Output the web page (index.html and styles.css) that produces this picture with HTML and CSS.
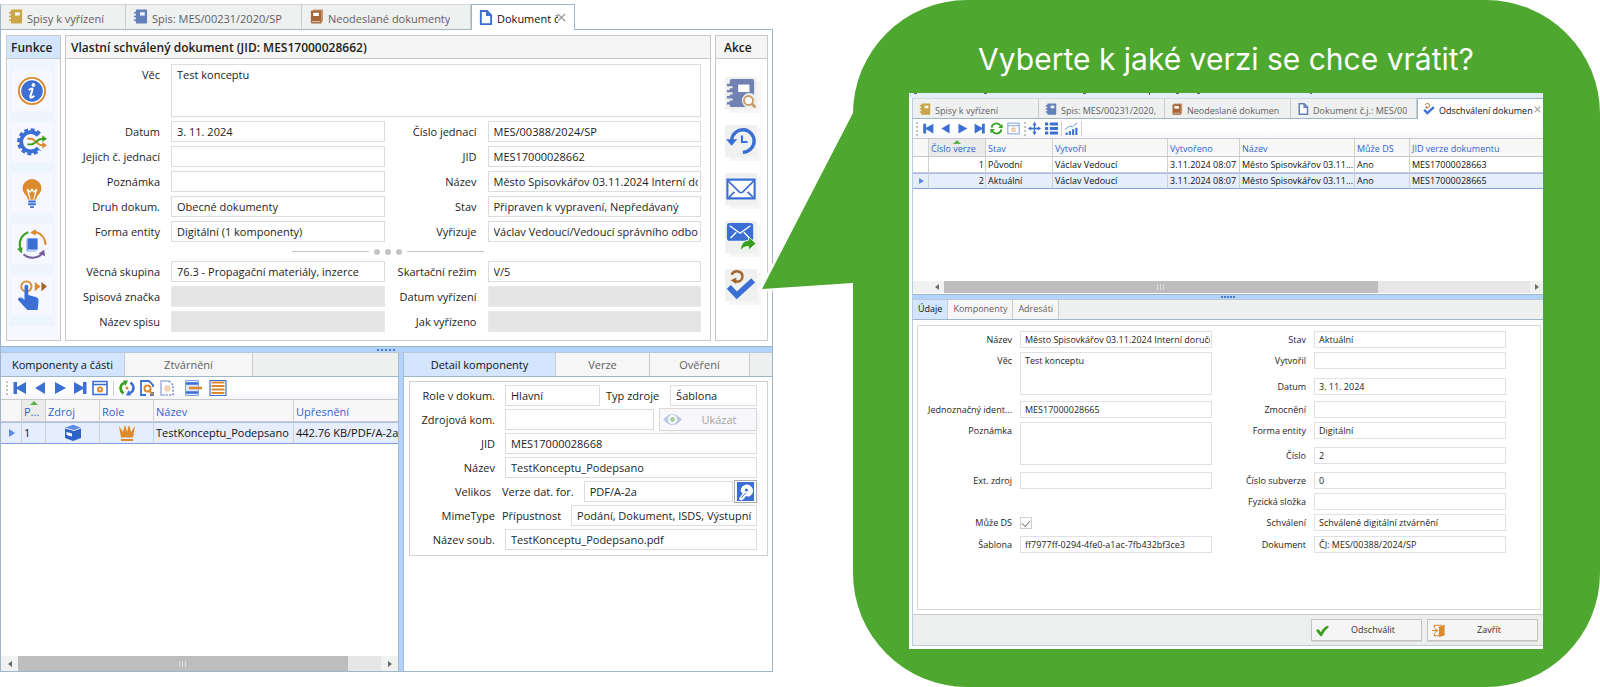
FILE: index.html
```html
<!DOCTYPE html>
<html lang="cs">
<head>
<meta charset="utf-8">
<meta name="viewport" content="width=device-width, initial-scale=1">
<title>Vlastní schválený dokument</title>
<link rel="stylesheet" href="styles.css">
</head>
<body>
<svg class="defs" aria-hidden="true">
  <symbol id="book" viewBox="0 0 16 16"><path fill="currentColor" d="M3 1.500q0-1 1-1h10q1 0 1 1v13q0 1-1 1H4q-1 0-1-1z"/><path stroke="currentColor" stroke-width="1.800" d="M1 4h4M1 8h4M1 12h4"/><path fill="#f4f6fb" d="M7.500 3.500h5v3.500h-5z"/></symbol>
  <symbol id="volume" viewBox="0 0 16 16"><path fill="#c79b74" d="M4 .5h11v12l-2 3z"/><path fill="#a5673a" d="M2 2.500q0-1 1-1h9q1 0 1 1v13H3q-1 0-1-1z"/><path fill="#fff" d="M4.500 4h6v3.500h-6z"/><path stroke="#e3cdbb" d="M3 13.500h9"/></symbol>
  <symbol id="page" viewBox="0 0 16 16"><path fill="#fff" stroke="currentColor" stroke-width="2" d="M3 1h6.500L14 5.500V15H3zM9.500 1v4.500H14"/></symbol>
  <symbol id="close" viewBox="0 0 10 10"><path fill="none" stroke="#a0a0a0" stroke-width="1.500" d="m1 1 8 8M9 1 1 9"/></symbol>
  <symbol id="first" viewBox="0 0 16 16"><path fill="#3b6fd4" d="M1.500 2H5v5l9-5v12L5 9v5H1.500z"/></symbol>
  <symbol id="prev" viewBox="0 0 16 16"><path fill="#3b6fd4" d="M13 2v12L3 8z"/></symbol>
  <symbol id="next" viewBox="0 0 16 16"><path fill="#3b6fd4" d="M3 2v12l11-6z"/></symbol>
  <symbol id="last" viewBox="0 0 16 16"><path fill="#3b6fd4" d="M14.500 2H11v5L2 2v12l9-5v5h3.500z"/></symbol>
  <symbol id="card" viewBox="0 0 16 16"><path fill="#fff" stroke="#3b6fd4" stroke-width="1.600" d="M1 1.500h14v13H1z"/><path stroke="#3b6fd4" stroke-width="1.500" d="M1 4.500h14"/><circle cx="8" cy="9.500" r="2" fill="#fff" stroke="#db8a2c" stroke-width="2"/></symbol>
  <symbol id="refresh2" viewBox="0 0 16 16"><path fill="none" stroke="#39a01e" stroke-width="2.600" d="M4.500 13.500C0 10 1 4 5.500 3"/><path fill="#39a01e" d="M4 .5h5L6.500 6z"/><path fill="none" stroke="#3b6fd4" stroke-width="2.600" d="M11.500 2.500c4.500 3.500 3.500 9.500-1 10.500"/><path fill="#3b6fd4" d="M12 15.500H7L9.500 10z"/><circle cx="8" cy="8" r="1.500" fill="#db8a2c"/></symbol>
  <symbol id="refresh" viewBox="0 0 16 16"><path fill="none" stroke="#39a01e" stroke-width="2.200" d="M2 7C2.500 1.500 10 0 13 4.500M14 9c-.5 5.500-8 7-11 2.500"/><path fill="#39a01e" d="M15.500 2v5.500H10zM.5 14V8.500H6z"/></symbol>
  <symbol id="find" viewBox="0 0 16 16"><path fill="#fff" stroke="#3b6fd4" stroke-width="1.800" d="M7 15H2V1h8l4 4v2M14 12v3h-3"/><circle cx="8.500" cy="8.500" r="3" fill="#fff" stroke="#db8a2c" stroke-width="2"/><path stroke="#db8a2c" stroke-width="2.200" d="m10.500 11 3.500 4"/></symbol>
  <symbol id="draft" viewBox="0 0 16 16"><path fill="none" stroke="#a5b4dc" stroke-width="1.600" d="M6 15H2V1h8"/><path fill="none" stroke="#8093c9" stroke-width="1.600" stroke-dasharray="2 1.500" d="m10 1 4 4v10H6"/><circle cx="8.500" cy="8.500" r="3.200" fill="#f0d2b4"/></symbol>
  <symbol id="group" viewBox="0 0 18 16"><path fill="#dfe8fa" stroke="#7fa0e2" stroke-width="1" d="M1.500 .5h13v15h-13z"/><path stroke="#3b6fd4" stroke-width="2.600" d="M2 3.500h12M2 12.500h12"/><path stroke="#db8a2c" stroke-width="2.600" d="M5 8h13"/></symbol>
  <symbol id="lines" viewBox="0 0 18 16"><path fill="#fff" stroke="#3b6fd4" stroke-width="1.200" d="M1 .5h16v15H1z"/><path stroke="#db8a2c" stroke-width="2" d="M2.500 2.500h13M2.500 6h13M2.500 9.500h13M2.500 13h13"/></symbol>
  <symbol id="move" viewBox="0 0 16 16"><path stroke="#3b6fd4" stroke-width="1.800" d="M8 1v14M1 8h14"/><path fill="#3b6fd4" d="M5.500 4 8 0l2.500 4zM5.500 12 8 16l2.500-4zM4 5.500 0 8l4 2.500zM12 5.500 16 8l-4 2.500z"/></symbol>
  <symbol id="list" viewBox="0 0 16 16"><path stroke="#3b6fd4" stroke-width="3.600" d="M0 2.500h4M6 2.500h10M0 8h4M6 8h10M0 13.500h4M6 13.500h10"/></symbol>
  <symbol id="chart" viewBox="0 0 16 16"><path stroke="#3b6fd4" stroke-width="2.600" d="M2 16v-3M6 16v-5M10 16V9M14 16V7"/><path fill="none" stroke="#6d92df" stroke-width="1.200" d="m0 9 6-4 3 1 6-5"/></symbol>
  <symbol id="box" viewBox="0 0 18 18"><path fill="#2f62c6" d="M1 4 9 1l8 3v10l-8 3-8-3z"/><path fill="#5d8be6" d="m1 4 8-3 8 3-7 2.500z"/><path stroke="#e9effc" stroke-width="1" fill="none" d="m1 4 9 2.500L17 4"/><path fill="#fff" d="m2.500 8 5.500 1.500v3L2.500 11z"/></symbol>
  <symbol id="crown" viewBox="0 0 18 18"><path fill="#db8a2c" d="m1 2 4 6 1.500-6h1L9 8l1.500-6h1L13 8l4-6-2 11.500H3z"/><path stroke="#db8a2c" stroke-width="2" d="M3 16h12"/></symbol>
  <symbol id="info" viewBox="0 0 32 32"><circle cx="16" cy="16" r="14" fill="#fff" stroke="#db8a2c" stroke-width="2"/><circle cx="16" cy="16" r="11.500" fill="#3b6fd4"/><circle cx="17.500" cy="9.500" r="2" fill="#fff"/><path fill="none" stroke="#fff" stroke-width="2.200" d="M12.500 15q3-2 4-1.500c1 .5-3.500 9-2 9.500q1 .5 4-2"/></symbol>
  <symbol id="gear" viewBox="0 0 32 32"><path fill="none" stroke="#3b6fd4" stroke-width="4" stroke-dasharray="4 2.600" d="M24 7.500A12.500 12.500 0 1 0 24 24"/><path fill="none" stroke="#3b6fd4" stroke-width="4" d="M22.500 9A10.300 10.300 0 1 0 22.500 22.500"/><path fill="none" stroke="#db8a2c" stroke-width="2" d="M11 12.500h4c5 0 6 7 12 7h2"/><path fill="none" stroke="#39a01e" stroke-width="2" d="M11 18.500h4c5 0 6-6 12-6h2"/><path fill="#39a01e" d="m27 9 5 3.500-5 3.500z"/><path fill="#db8a2c" d="m27 16 5 3.500-5 3.500z"/></symbol>
  <symbol id="bulb" viewBox="0 0 32 32"><path fill="#db8a2c" d="M16 1a10 10 0 0 0-10 10c0 6 5 7 5.500 12h9C21 18 26 17 26 11A10 10 0 0 0 16 1"/><path fill="none" stroke="#fff" stroke-width="1.400" d="m14 22-3-10 3 3 2-3 2 3 3-3-3 10"/><path stroke="#3b6fd4" stroke-width="2" d="M12 25h8M12 28h8M14 31h4"/></symbol>
  <symbol id="cycle" viewBox="0 0 32 32"><path fill="#3b6fd4" d="M11 10h11v12H11z"/><path fill="#8dabec" d="M10 11h1.500v12H21v1H10z"/><path fill="none" stroke="#39a01e" stroke-width="2.200" d="M12 3.500C5 6 1.500 13 3.500 21"/><path fill="#39a01e" d="m0 21 6-1.500L5 26z"/><path fill="none" stroke="#db8a2c" stroke-width="2.200" d="M18 3c7 1 12 6 12.500 14"/><path fill="#db8a2c" d="M20 0v7l-6-3z"/><path fill="none" stroke="#75609c" stroke-width="2.200" d="M7 27c5 5 15 5 20-1"/><path fill="#75609c" d="m29 22 1 7-7-3z"/></symbol>
  <symbol id="tap" viewBox="0 0 32 32"><circle cx="10" cy="7" r="5.500" fill="none" stroke="#db8a2c" stroke-width="2"/><path fill="#3b6fd4" d="M8 7q0-2 2-2t2 2v9l8 2q3 1 3 4l-1 10H11L1 21q0-3 4-2l3 2z"/><path fill="#db8a2c" d="m19 2 6 5-6 5z"/><path fill="#a5652a" d="m26 2 6 5-6 5z"/></symbol>
  <symbol id="bookfind" viewBox="0 0 32 32"><path fill="#7181b1" d="M4 3q0-2 2-2h22q2 0 2 2v28H6q-2 0-2-2z"/><path stroke="#eef0ef" stroke-width="3" d="M2 9.500h5M2 16h5M2 22.500h5"/><path stroke="#7181b1" stroke-width="2.600" d="M1 7.500h7M1 14h7M1 20.500h7M1 27h7"/><path fill="#fff" d="M13 7h12v8H13z"/><circle cx="25" cy="24" r="8" fill="#eef0ef"/><circle cx="24" cy="24" r="4.800" fill="#fff" stroke="#c99a6b" stroke-width="2"/><path stroke="#c99a6b" stroke-width="3" d="m27.500 27.500 4 4"/></symbol>
  <symbol id="history" viewBox="0 0 32 32"><path fill="none" stroke="#3b6fd4" stroke-width="3.600" d="M6 15a12 12 0 1 1 12 13"/><path fill="#3b6fd4" d="M0 14h12l-6 7z"/><path fill="none" stroke="#3b6fd4" stroke-width="2.200" d="M17 10v7h6"/></symbol>
  <symbol id="mail" viewBox="0 0 32 32"><path fill="#fff" stroke="#3b6fd4" stroke-width="2.200" d="M1.500 6h29v20h-29z"/><path fill="none" stroke="#3b6fd4" stroke-width="1.800" d="m2 7 12 12q2 1.500 4 0L30 7M3 25l6-6M29 25l-6-6"/></symbol>
  <symbol id="send" viewBox="0 0 32 32"><rect x="1" y="1" width="28" height="19" rx="3" fill="#3b6fd4"/><path fill="none" stroke="#fff" stroke-width="1.500" d="m4 4 11 8L26 4M5 17l6-6M25 17l-6-6"/><path fill="#39a01e" stroke="#fff" stroke-width=".8" d="M24 15.500 32 23l-8 7v-4q-6 0-9 5 1-11 9-11.500z"/></symbol>
  <symbol id="unapprove" viewBox="0 0 32 32"><path fill="none" stroke="#3b6fd4" stroke-width="6" d="m3 18 8.500 9L29 11"/><path fill="none" stroke="#a5652a" stroke-width="2.600" d="M6 5C9-1 18 1 17.500 7.500 17 12 13 13 10 12"/><path fill="#a5652a" d="m11 8v7L5 11z"/></symbol>
  <symbol id="eye" viewBox="0 0 20 14"><path fill="#b8cade" d="M0 7Q10-5 20 7 10 19 0 7"/><circle cx="10" cy="7" r="5" fill="#f5f7fc"/><circle cx="10" cy="7" r="2.600" fill="#a9cf9f"/></symbol>
  <symbol id="disk" viewBox="0 0 20 20"><path fill="#3b6fd4" d="M1 0h18v20H1z"/><path fill="#fff" d="M5 10a6.500 6.500 0 1 1 8 5.500l-2-1-4 4.500q-3 1-4-1.500L7 12z"/><circle cx="11" cy="8.500" r="1.600" fill="#3b6fd4"/><path stroke="#3b6fd4" stroke-width="1" d="m5.500 16.500 5-5"/></symbol>
  <symbol id="check" viewBox="0 0 16 16"><path fill="#39a01e" d="m0 8 3-2 3 4q3-6 8-8l2 1.500q-5 4-9 11.500H5.500z"/></symbol>
  <symbol id="exit" viewBox="0 0 16 16"><path fill="none" stroke="#db8a2c" stroke-width="1.400" d="M3 5V1.500h9M3 11v3.500h6"/><path fill="#db8a2c" d="M8.500 3.500 15.500 1v13l-7 2z"/><path fill="#db8a2c" d="M0 7.300h4V5l3.500 3L4 11V8.700H0z"/></symbol>
</svg>

<main class="stage">
  <section class="app">
    <nav class="tabs doc-tabs">
      <button class="tab tab-a"><svg class="gold"><use href="#book"/></svg><span>Spisy k vyřízení</span></button>
      <button class="tab tab-b"><svg class="slate"><use href="#book"/></svg><span>Spis: MES/00231/2020/SP</span></button>
      <button class="tab tab-c"><svg><use href="#volume"/></svg><span>Neodeslané dokumenty</span></button>
      <button class="tab tab-d active"><svg class="blue"><use href="#page"/></svg><span class="cut">Dokument č</span><svg class="x"><use href="#close"/></svg></button>
    </nav>
    <div class="app-body">
      <div class="upper">
        <aside class="side functions">
          <h2>Funkce</h2>
          <div class="side-list">
            <button aria-label="Informace"><svg><use href="#info"/></svg></button>
            <button aria-label="Procesy"><svg><use href="#gear"/></svg></button>
            <button aria-label="Nápověda"><svg><use href="#bulb"/></svg></button>
            <button aria-label="Oběh"><svg><use href="#cycle"/></svg></button>
            <button aria-label="Rychlá volba"><svg><use href="#tap"/></svg></button>
          </div>
        </aside>
        <section class="record">
          <h2>Vlastní schválený dokument (JID: MES17000028662)</h2>
          <form class="record-form">
            <label for="vec">Věc</label><textarea id="vec" class="wide" readonly>Test konceptu</textarea>
            <label for="datum">Datum</label><input id="datum" readonly value="3. 11. 2024">
            <label for="cj">Číslo jednací</label><input id="cj" readonly value="MES/00388/2024/SP">
            <label for="jcj">Jejich č. jednací</label><input id="jcj" readonly>
            <label for="jid">JID</label><input id="jid" readonly value="MES17000028662">
            <label for="pozn">Poznámka</label><input id="pozn" readonly>
            <label for="nazev">Název</label><input id="nazev" readonly value="Město Spisovkářov 03.11.2024 Interní doručení">
            <label for="druh">Druh dokum.</label><input id="druh" readonly value="Obecné dokumenty">
            <label for="stav">Stav</label><input id="stav" readonly value="Připraven k vypravení, Nepředávaný">
            <label for="forma">Forma entity</label><input id="forma" readonly value="Digitální (1 komponenty)">
            <label for="vyr">Vyřizuje</label><input id="vyr" readonly value="Václav Vedoucí/Vedoucí správního odboru">
            <div class="divider"><hr><i></i><i></i><i></i><hr></div>
            <label for="skup">Věcná skupina</label><input id="skup" readonly value="76.3 - Propagační materiály, inzerce">
            <label for="skart">Skartační režim</label><input id="skart" readonly value="V/5">
            <label for="sz">Spisová značka</label><input id="sz" disabled>
            <label for="dv">Datum vyřízení</label><input id="dv" disabled>
            <label for="ns">Název spisu</label><input id="ns" disabled>
            <label for="jv">Jak vyřízeno</label><input id="jv" disabled>
          </form>
        </section>
        <aside class="side actions">
          <h2>Akce</h2>
          <div class="side-list">
            <button aria-label="Prohlížet spis"><svg><use href="#bookfind"/></svg></button>
            <button aria-label="Historie"><svg><use href="#history"/></svg></button>
            <button aria-label="Obálka"><svg><use href="#mail"/></svg></button>
            <button aria-label="Vypravit"><svg><use href="#send"/></svg></button>
            <button aria-label="Odschválit dokument"><svg><use href="#unapprove"/></svg></button>
          </div>
        </aside>
      </div>
      <div class="splitter"><b></b></div>
      <div class="lower">
        <section class="components">
          <nav class="tabs sub-tabs">
            <button class="tab active comp-a">Komponenty a části</button>
            <button class="tab comp-b">Ztvárnění</button>
          </nav>
          <div class="toolbar">
            <i class="grip"></i>
            <button aria-label="První"><svg><use href="#first"/></svg></button>
            <button aria-label="Předchozí"><svg><use href="#prev"/></svg></button>
            <button aria-label="Další"><svg><use href="#next"/></svg></button>
            <button aria-label="Poslední"><svg><use href="#last"/></svg></button>
            <button aria-label="Karta"><svg><use href="#card"/></svg></button>
            <i class="rule"></i>
            <button aria-label="Obnovit"><svg><use href="#refresh2"/></svg></button>
            <button aria-label="Hledat"><svg><use href="#find"/></svg></button>
            <button class="draft" aria-label="Koncept"><svg><use href="#draft"/></svg></button>
            <button class="broad" aria-label="Seskupit"><svg><use href="#group"/></svg></button>
            <button class="broad" aria-label="Řádky"><svg><use href="#lines"/></svg></button>
          </div>
          <table class="grid comp-grid">
            <colgroup><col class="c21"><col class="c24"><col class="c54"><col class="c54"><col class="c140"><col></colgroup>
            <thead><tr><th></th><th class="sorted">P...</th><th>Zdroj</th><th>Role</th><th>Název</th><th>Upřesnění</th></tr></thead>
            <tbody><tr class="current"><td></td><td>1</td><td class="pic"><svg><use href="#box"/></svg></td><td class="pic"><svg><use href="#crown"/></svg></td><td>TestKonceptu_Podepsano</td><td>442.76 KB/PDF/A-2a</td></tr></tbody>
          </table>
          <div class="scrollbar"><i class="arrow left"></i><span class="track"><b class="thumb thumb-l"></b></span><i class="arrow"></i></div>
        </section>
        <div class="vsplit"></div>
        <section class="detail">
          <nav class="tabs sub-tabs">
            <button class="tab active det-a">Detail komponenty</button>
            <button class="tab det-b">Verze</button>
            <button class="tab det-c">Ověření</button>
          </nav>
          <form class="detail-form">
            <div class="row"><label for="role">Role v dokum.</label><input id="role" class="f95" readonly value="Hlavní"><label class="mid" for="typ">Typ zdroje</label><input id="typ" readonly value="Šablona"></div>
            <div class="row"><label for="zk">Zdrojová kom.</label><input id="zk" readonly><button type="button" class="show" disabled><svg><use href="#eye"/></svg><span>Ukázat</span></button></div>
            <div class="row"><label for="djid">JID</label><input id="djid" readonly value="MES17000028668"></div>
            <div class="row"><label for="dn">Název</label><input id="dn" readonly value="TestKonceptu_Podepsano"></div>
            <div class="row"><span class="lead vel">Velikos</span><label class="near" for="vdf">Verze dat. for.</label><input id="vdf" readonly value="PDF/A-2a"><button type="button" class="disk" aria-label="Uložit"><svg><use href="#disk"/></svg></button></div>
            <div class="row"><span class="lead">MimeType</span><label class="near" for="prip">Přípustnost</label><input id="prip" readonly value="Podání, Dokument, ISDS, Výstupní"></div>
            <div class="row"><label for="soub">Název soub.</label><input id="soub" readonly value="TestKonceptu_Podepsano.pdf"></div>
          </form>
        </section>
      </div>
    </div>
  </section>

  <section class="bubble">
    <svg class="tail" viewBox="0 0 112 190" aria-hidden="true"><path fill="none" stroke="#fff" stroke-width="5" d="M92 16 5 184l87-6"/><path fill="#4ea72e" d="M96 8 5 184l91-6h16V8z"/></svg>
    <h1>Vyberte k jaké verzi se chce vrátit?</h1>
    <div class="window">
      <svg class="strip" viewBox="0 0 634 6" preserveAspectRatio="none" aria-hidden="true"><path fill="#e4edfa" d="M0 0h634v6H0z"/><path fill="#333" d="M5 0h3v1H5zM75 0h3v1h-3zM174 0h3v1h-3zM240 0h1v2h-1zM267 0h3v1h-3zM288 0h3v1h-3zM401 0h2v1h-2z"/></svg>
      <nav class="tabs win-tabs">
        <button class="tab"><svg class="gold"><use href="#book"/></svg><span>Spisy k vyřízení</span></button>
        <button class="tab"><svg class="slate"><use href="#book"/></svg><span>Spis: MES/00231/2020,</span></button>
        <button class="tab"><svg><use href="#volume"/></svg><span>Neodeslané dokumen</span></button>
        <button class="tab"><svg class="slate"><use href="#page"/></svg><span>Dokument č.j.: MES/00</span></button>
        <button class="tab active"><svg><use href="#unapprove"/></svg><span>Odschválení dokumen</span><svg class="x"><use href="#close"/></svg></button>
      </nav>
      <div class="toolbar small">
        <i class="grip"></i>
        <button aria-label="První"><svg><use href="#first"/></svg></button>
        <button aria-label="Předchozí"><svg><use href="#prev"/></svg></button>
        <button aria-label="Další"><svg><use href="#next"/></svg></button>
        <button aria-label="Poslední"><svg><use href="#last"/></svg></button>
        <button aria-label="Obnovit"><svg><use href="#refresh"/></svg></button>
        <button class="faded" aria-label="Karta"><svg><use href="#card"/></svg></button>
        <i class="grip"></i>
        <button aria-label="Přesunout"><svg><use href="#move"/></svg></button>
        <button aria-label="Seznam"><svg><use href="#list"/></svg></button>
        <i class="rule"></i>
        <button aria-label="Graf"><svg><use href="#chart"/></svg></button>
        <i class="rule"></i>
      </div>
      <div class="list">
        <table class="grid ver-grid">
          <colgroup><col class="c16"><col class="c57"><col class="c67"><col class="c115"><col class="c72"><col class="c115"><col class="c55"><col></colgroup>
          <thead><tr><th></th><th class="sorted">Číslo verze</th><th>Stav</th><th>Vytvořil</th><th>Vytvořeno</th><th>Název</th><th>Může DS</th><th>JID verze dokumentu</th></tr></thead>
          <tbody>
            <tr><td></td><td class="num">1</td><td>Původní</td><td>Václav Vedoucí</td><td>3.11.2024 08:07</td><td>Město Spisovkářov 03.11...</td><td>Ano</td><td>MES17000028663</td></tr>
            <tr class="current"><td></td><td class="num">2</td><td>Aktuální</td><td>Václav Vedoucí</td><td>3.11.2024 08:07</td><td>Město Spisovkářov 03.11...</td><td>Ano</td><td>MES17000028665</td></tr>
          </tbody>
        </table>
        <div class="scrollbar thin"><i class="arrow left"></i><span class="track"><b class="thumb thumb-r"></b></span><i class="arrow"></i></div>
      </div>
      <div class="splitter thin"><b></b></div>
      <nav class="tabs sub-tabs thin">
        <button class="tab active">Údaje</button>
        <button class="tab">Komponenty</button>
        <button class="tab">Adresáti</button>
      </nav>
      <div class="sheet">
        <form class="version-form">
          <label class="r1" for="v1">Název</label><input class="r1" id="v1" readonly value="Město Spisovkářov 03.11.2024 Interní doručení">
          <label class="r2" for="v2">Věc</label><textarea class="r2" id="v2" readonly>Test konceptu</textarea>
          <label class="r4" for="v3">Jednoznačný ident...</label><input class="r4" id="v3" readonly value="MES17000028665">
          <label class="r5" for="v4">Poznámka</label><textarea class="r5" id="v4" readonly></textarea>
          <label class="r7" for="v5">Ext. zdroj</label><input class="r7" id="v5" readonly>
          <label class="r9" for="v6">Může DS</label><input class="r9" id="v6" type="checkbox" checked disabled>
          <label class="r10" for="v7">Šablona</label><input class="r10" id="v7" readonly value="ff7977ff-0294-4fe0-a1ac-7fb432bf3ce3">
          <label class="r1 two" for="w1">Stav</label><input class="r1 two" id="w1" readonly value="Aktuální">
          <label class="r2 two" for="w2">Vytvořil</label><input class="r2 two" id="w2" readonly>
          <label class="r3 two" for="w3">Datum</label><input class="r3 two" id="w3" readonly value="3. 11. 2024">
          <label class="r4 two" for="w4">Zmocnění</label><input class="r4 two" id="w4" readonly>
          <label class="r5 two" for="w5">Forma entity</label><input class="r5 two" id="w5" readonly value="Digitální">
          <label class="r6 two" for="w6">Číslo</label><input class="r6 two" id="w6" readonly value="2">
          <label class="r7 two" for="w7">Číslo subverze</label><input class="r7 two" id="w7" readonly value="0">
          <label class="r8 two" for="w8">Fyzická složka</label><input class="r8 two" id="w8" readonly>
          <label class="r9 two" for="w9">Schválení</label><input class="r9 two" id="w9" readonly value="Schválené digitální ztvárnění">
          <label class="r10 two" for="w10">Dokument</label><input class="r10 two" id="w10" readonly value="ČJ: MES/00388/2024/SP">
        </form>
      </div>
      <footer class="buttons">
        <button><svg><use href="#check"/></svg><span>Odschválit</span></button>
        <button><svg><use href="#exit"/></svg><span>Zavřít</span></button>
      </footer>
    </div>
  </section>
</main>
</body>
</html>
```

FILE: styles.css
```css
* { box-sizing: border-box; }
body { margin: 0; background: #fff; color: #1d1d1d; font: 11px/16px "Open Sans", "Noto Sans", sans-serif; }
button, input, textarea { font: inherit; color: inherit; margin: 0; border-radius: 0; }
button { padding: 0; border: 0; background: none; }
svg { display: block; flex: none; }
h1, h2, form, hr { margin: 0; }
.defs { position: absolute; width: 0; height: 0; }

.stage { display: grid; grid-template-columns: 773fr 80fr 747fr; min-height: 100vh; }
.app { display: flex; flex-direction: column; padding: 4px 0 15px; min-width: 0; }
.app-body { flex: 1; display: flex; flex-direction: column; border: 1px solid #9fb6c6; border-top: 0; }

/* tabs */
.tabs { display: flex; }
.tab { display: flex; align-items: center; text-align: left; white-space: nowrap; overflow: hidden; color: #5f5f5f; background: #eff0f0; border-right: 1px solid #c8cccf; }
.tab.active { color: #111; }
.tab span { overflow: hidden; }
.gold { color: #c9a748; }
.slate { color: #6480b8; }
.blue { color: #3b6fd4; }
.doc-tabs { height: 26px; border-bottom: 1px solid #9fb6c6; }
.doc-tabs .tab { height: 25px; gap: 4px; padding: 3px 0 0 7px; border-top: 1px solid #d5d8da; }
.doc-tabs .tab svg { width: 15px; height: 15px; margin-top: -4px; }
.doc-tabs .tab.active { height: 26px; padding-left: 6px; background: #fff; border: 1px solid #9fb6c6; border-bottom: 0; }
.doc-tabs .tab svg.x { width: 9px; height: 9px; margin-left: -5px; }
.tab-a { width: 126px; border-left: 1px solid #9fb6c6; }
.tab-b { width: 176px; }
.tab-c { width: 169px; }
.tab-d { width: 104px; }
.tab-d .cut { width: 61px; }

/* upper part */
.upper { display: flex; gap: 4px; padding: 5px 4px 5px 5px; }
.side, .record { border: 1px solid #c9c9c9; }
h2 { height: 23px; padding: 0 5px; font-size: 12px; line-height: 23px; font-weight: 600; background: #f5f5f5; border-bottom: 1px solid #c9c9c9; white-space: nowrap; overflow: hidden; }
.side { display: flex; flex-direction: column; }
.side h2 { padding: 0 4px; }
.actions h2 { padding: 0 8px; }
.side-list { display: flex; flex-direction: column; align-items: center; }
.side-list svg { width: 30px; height: 30px; }
.functions { width: 55px; background: #f6f7ff; }
.functions h2 { background: #d3e5ff; }
.functions .side-list { gap: 11px; margin: 1px 5px 14px 2px; padding: 11px 0; background: #eef5ff; }
.functions button { display: grid; place-items: center; width: 42px; height: 40px; background: #f6f7ff; }
.record { flex: 1; min-width: 0; }
.actions { width: 53px; }
.actions .side-list { gap: 16px; padding: 18px 2px 0 0; }
.actions button { background: #eff0f0; padding: 1px; box-shadow: 4px 4px 0 #f6f6f6; }

input, textarea { width: 100%; min-width: 0; padding: 0 2px 0 5px; border: 1px solid #dcdcdc; background: #fff; outline: 0; resize: none; overflow: hidden; }
input { height: 21px; }
label { text-align: right; white-space: nowrap; }
.record-form { display: grid; grid-template-columns: 86px 1fr 81px 1fr; gap: 4px 11px; padding: 5px 9px 5px 8px; }
.record-form label { line-height: 21px; }
.wide { grid-column: 2 / -1; height: 53px; padding-top: 2px; display: block; }
input:disabled { background: #e5e5e5; border-color: #e9e9e9; }
.divider { grid-column: 1 / -1; display: flex; align-items: center; justify-content: center; gap: 5px; height: 11px; }
.divider hr { width: 77px; height: 1px; border: 0; background: #c4c4c4; }
.divider i { width: 6px; height: 6px; border-radius: 3px; background: #c4c4c4; }

/* splitters */
.splitter { display: flex; align-items: center; justify-content: center; height: 7px; background: #b3d3fc; border-top: 1px solid #9fb6c6; border-bottom: 1px solid #b9c9d8; }
.splitter b { width: 19px; height: 2px; background: repeating-linear-gradient(90deg, #4a7bd8 0 2px, transparent 2px 4px); }
.splitter.thin { height: 6px; }
.splitter.thin b { width: 15px; background: repeating-linear-gradient(90deg, #4a7bd8 0 2px, transparent 2px 3px); }
.vsplit { width: 6px; background: #b3d3fc; border: 1px solid #a5bdd2; border-width: 0 1px; }

/* lower part */
.lower { flex: 1; display: flex; }
.components { flex: 397 1 0; display: flex; flex-direction: column; min-width: 0; }
.detail { flex: 368 1 0; min-width: 0; }
.sub-tabs { height: 24px; background: #eef0f0; border-bottom: 1px solid #9fb6c6; }
.sub-tabs .tab { justify-content: center; background: #f6f6f6; }
.sub-tabs .tab.active { background: #d3e5ff; }
.comp-a { width: 124px; }
.comp-b { width: 128px; }
.det-a { width: 152px; }
.det-b { width: 94px; }
.det-c { width: 100px; }

.toolbar { display: flex; align-items: center; height: 23px; padding-left: 5px; gap: 4px; background: linear-gradient(#fff 60%, #f6f7fd); border-bottom: 1px solid #c9c9c9; }
.toolbar button { width: 16px; padding: 0; }
.toolbar svg { width: 16px; height: 16px; }
.toolbar .draft { margin-right: 5px; }
.toolbar .broad { width: 21px; }
.toolbar .broad svg { width: 18px; }
.grip { width: 2px; height: 14px; background: repeating-linear-gradient(#c2c2c2 0 2px, transparent 2px 4px); }
.rule { width: 1px; height: 15px; margin: 0 1px; background: #d0d0d0; }
.toolbar.small { height: 20px; padding-left: 3px; }
.toolbar.small button { width: 13px; }
.toolbar.small svg { width: 13px; height: 13px; }
.toolbar.small .grip ~ .grip { margin-right: -2px; }
.toolbar.small .rule { margin: 0 -1px; }
.faded { opacity: .5; }

.grid { width: 100%; table-layout: fixed; border-collapse: separate; border-spacing: 0; color: #111; }
.grid th { height: 22px; padding: 2px 2px 0; font-weight: 400; text-align: left; color: #3064cc; background: #f7f7f7; }
.grid td { height: 22px; padding: 0 2px; }
.grid th, .grid td { border-right: 1px solid #d0d0d0; border-bottom: 1px solid #c9c9c9; white-space: nowrap; overflow: hidden; }
.grid th:last-child, .grid td:last-child { border-right: 0; }
.grid .sorted { background: #ebebeb; position: relative; }
.sorted::before { content: ""; position: absolute; top: 1px; left: calc(50% - 4px); border: 4px solid transparent; border-top: 0; border-bottom-color: #5eb04a; }
.grid .current td { background: #e6edfc; border-bottom-color: #7f9fe0; border-top: 1px solid #a9bff0; }
.current td:first-child::before { content: ""; display: block; margin-left: 6px; width: 0; border: 4px solid transparent; border-left: 6px solid #5a8ae0; border-right: 0; }
.pic svg { width: 18px; height: 18px; margin: 0 auto; }
.num { text-align: right; }
.c16 { width: 16px; } .c21 { width: 21px; } .c24 { width: 24px; } .c54 { width: 54px; } .c55 { width: 55px; } .c57 { width: 57px; } .c67 { width: 67px; } .c72 { width: 72px; } .c115 { width: 115px; } .c140 { width: 140px; }

.scrollbar { display: flex; height: 15px; margin-top: auto; background: #f0f1f1; }
.track { flex: 1; background: #e6e6e6; }
.thumb { display: block; height: 100%; background: repeating-linear-gradient(90deg, #dedede 0 1px, transparent 1px 3px) no-repeat center / 8px 6px, #bdbdbd; }
.thumb-l { width: 91%; }
.thumb-r { width: 74%; }
.arrow { display: grid; place-items: center; width: 17px; }
.arrow::before { content: ""; border: 3px solid transparent; border-left: 4px solid #6c6c6c; border-right: 0; }
.arrow.left::before { border-left: 0; border-right: 4px solid #6c6c6c; }
.scrollbar.thin { height: 12px; margin-bottom: 1px; }
.thin .arrow { width: 13px; }
.thin .arrow.left { width: 31px; padding-left: 16px; }

.detail-form { display: flex; flex-direction: column; gap: 3px; margin: 4px 4px 0 5px; padding: 3px 10px 5px; border: 1px solid #cfcfcf; }
.row { display: flex; align-items: center; }
.row label:first-child, .lead { flex: none; width: 75px; margin-right: 10px; text-align: right; }
.row input { flex: 1; height: 21px; }
.row .f95 { flex: none; width: 95px; }
.row .mid { margin: 0 11px 0 6px; }
.row .lead { margin-right: 7px; }
.row .vel { padding-right: 4px; }
.row .near { margin-right: 10px; }
.show { display: flex; align-items: center; width: 98px; height: 23px; margin: -1px 0 -1px 5px; padding-left: 3px; color: #a3a3a3; background: #f7f7fc; border: 1px solid #d8d8d8; box-shadow: 3px 2px 0 #f8f8f8; }
.show svg { width: 19px; height: 13px; }
.show span { flex: 1; text-align: center; }
.disk { height: 23px; width: 23px; margin: -1px 0 -1px 1px; padding: 1px; border: 1px solid #aaa; box-shadow: 3px 2px 0 #f8f8f8; }
.disk svg { width: 19px; height: 19px; }

/* speech bubble */
.bubble { grid-column: 3; position: relative; display: flex; flex-direction: column; padding: 0 57px 38px 56px; background: #4ea72e; border-radius: 114px; font-size: 9px; line-height: 14px; min-width: 0; }
.tail { position: absolute; left: -96px; top: 105px; width: 112px; height: 190px; }
h1 { height: 93px; padding-top: 37px; color: #fff; font: 400 30px/44px Inter, "Open Sans", sans-serif; text-align: center; white-space: nowrap; }
.window { flex: 1; display: flex; flex-direction: column; padding: 0 0 3px 3px; background: #fff; min-width: 0; }
.window > *:not(.strip) { border-left: 1px solid #b9cbdf; }
.strip { width: calc(100% + 3px); height: 5px; margin-left: -3px; }
.win-tabs { height: 21px; border-bottom: 1px solid #9fb6c6; }
.win-tabs .tab { width: 20%; gap: 4px; padding: 4px 8px 0 6px; border-top: 1px solid #d5d8da; }
.win-tabs .tab svg { width: 12px; height: 12px; margin-top: -4px; }
.win-tabs .tab.active { height: 21px; background: #fff; border: 1px solid #9fb6c6; border-width: 1px 0 0 1px; padding: 4px 2px 0 5px; }
.win-tabs .tab.active span { flex: 1; }
.win-tabs .tab.active svg.x { width: 7px; height: 7px; margin-left: -4px; }
.list { flex: 159 1 0; display: flex; flex-direction: column; }
.ver-grid th { height: 18px; padding-top: 2px; }
.ver-grid td { height: 16px; }
.ver-grid th, .ver-grid td { padding-left: 2px; padding-right: 1px; }
.ver-grid .current td:first-child::before { margin-left: 4px; border-width: 3px 0 3px 5px; }
.sub-tabs.thin { height: 20px; }
.thin .tab { padding: 0 5px; }
.sheet { flex: 293 1 0; padding: 5px 2px 4px 4px; border-bottom: 1px solid #c9c9c9; }
.version-form { height: 100%; display: grid; grid-template-columns: 89px 1fr 86px 1fr; grid-template-rows: 21px 26px 23px 21px 25px 25px 21px 21px 22px 17px; column-gap: 8px; padding: 5px 34px 0 5px; border: 1px solid #d9d9d9; align-items: start; }
.version-form label { grid-column: 1; line-height: 17px; }
.version-form input, .version-form textarea { grid-column: 2; height: 17px; padding: 0 1px 0 4px; border-color: #e1e1e4; }
.version-form textarea { height: 43px; padding-top: 1px; }
.version-form label.two { grid-column: 3; }
.version-form input.two { grid-column: 4; }
.r1 { grid-row: 1; } .r2 { grid-row: 2; } .r3 { grid-row: 3; } .r4 { grid-row: 4; } .r5 { grid-row: 5; }
.r6 { grid-row: 6; } .r7 { grid-row: 7; } .r8 { grid-row: 8; } .r9 { grid-row: 9; } .r10 { grid-row: 10; }
.version-form textarea.r2 { grid-row: 2 / 4; }
.version-form textarea.r5 { grid-row: 5 / 7; }
.version-form input[type="checkbox"] { appearance: none; width: 12px; height: 12px; margin-top: 3px; padding: 0; background: #fff; border: 1px solid #cfcfcf; }
.version-form input[type="checkbox"]::before { content: ""; display: block; width: 7px; height: 4px; margin: 2px 1px; border: solid #8a8a8a; border-width: 0 0 1px 1px; transform: rotate(-48deg); }
.buttons { display: flex; justify-content: flex-end; gap: 5px; padding: 4px 5px 4px; background: #edeeee; border-bottom: 1px solid #b9cbdf; }
.buttons button { display: flex; align-items: center; width: 111px; height: 22px; padding: 0 4px; background: #f5f5f5; border: 1px solid #c3c3c3; box-shadow: 0 1px 0 #d8d8d8; color: #333; }
.buttons svg { width: 13px; height: 13px; }
.buttons span { flex: 1; text-align: center; }
```
